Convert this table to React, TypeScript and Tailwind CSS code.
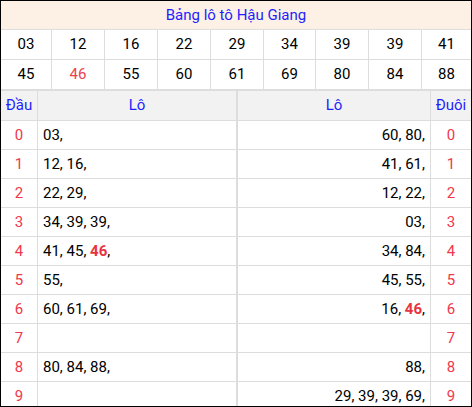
import React from "react";

const nums1 = ["03", "12", "16", "22", "29", "34", "39", "39", "41"];
const nums2 = ["45", "46", "55", "60", "61", "69", "80", "84", "88"];
const colW = ["w-[51px]", "w-[53px]", "w-[53px]", "w-[53px]", "w-[53px]", "w-[52px]", "w-[53px]", "w-[53px]", "w-[49px]"];

type Part = { t: string; hot?: boolean };
const rows: { d: string; left: Part[]; right: Part[] }[] = [
  { d: "0", left: [{ t: "03," }], right: [{ t: "60, 80," }] },
  { d: "1", left: [{ t: "12, 16," }], right: [{ t: "41, 61," }] },
  { d: "2", left: [{ t: "22, 29," }], right: [{ t: "12, 22," }] },
  { d: "3", left: [{ t: "34, 39, 39," }], right: [{ t: "03," }] },
  { d: "4", left: [{ t: "41, 45, " }, { t: "46", hot: true }, { t: "," }], right: [{ t: "34, 84," }] },
  { d: "5", left: [{ t: "55," }], right: [{ t: "45, 55," }] },
  { d: "6", left: [{ t: "60, 61, 69," }], right: [{ t: "16, " }, { t: "46", hot: true }, { t: "," }] },
  { d: "7", left: [], right: [] },
  { d: "8", left: [{ t: "80, 84, 88," }], right: [{ t: "88," }] },
  { d: "9", left: [], right: [{ t: "29, 39, 39, 69," }] },
];

function Parts({ parts }: { parts: Part[] }) {
  return (
    <span className="whitespace-pre">
      {parts.map((p, i) =>
        p.hot ? (
          <b key={i} className="font-bold text-[#e8333f]">
            {p.t}
          </b>
        ) : (
          <React.Fragment key={i}>{p.t}</React.Fragment>
        )
      )}
    </span>
  );
}

function NumRow({ nums, last }: { nums: string[]; last?: boolean }) {
  return (
    <div className={`flex ${last ? "h-[31px] border-b-2" : "h-[30px] border-b"} border-[#dddddd]`}>
      {nums.map((n, i) => (
        <div
          key={i}
          className={`${colW[i]} flex items-center justify-center ${i < 8 ? "border-r border-[#dddddd]" : ""} ${
            n === "46" ? "text-[#ee3e50]" : "text-black"
          }`}
        >
          {n}
        </div>
      ))}
    </div>
  );
}

export default function App() {
  return (
    <div
      className="w-[472px] h-[407px] border border-black overflow-hidden bg-white text-[15px] leading-none"
      style={{ fontFamily: "Roboto, 'Noto Sans', sans-serif" }}
    >
      <div className="h-[29px] bg-[#fdf0e4] border-b border-[#dddddd] flex items-center justify-center text-[#1f1fff]">
        Bảng lô tô Hậu Giang
      </div>
      <NumRow nums={nums1} />
      <NumRow nums={nums2} last />
      <div className="flex h-[30px] bg-[#f2f2f2] border-b border-[#dddddd] text-[#1f1fff]">
        <div className="w-[37px] border-r border-[#dddddd] flex items-center justify-center">Đầu</div>
        <div className="w-[200px] border-r-2 border-[#dddddd] flex items-center justify-center">Lô</div>
        <div className="w-[193px] border-r border-[#dddddd] flex items-center justify-center">Lô</div>
        <div className="w-[40px] flex items-center justify-center">Đuôi</div>
      </div>
      {rows.map((r) => (
        <div key={r.d} className="flex h-[29px] border-b border-[#dddddd] shrink-0">
          <div className="w-[37px] border-r border-[#dddddd] flex items-center justify-center text-[#f0384c]">
            {r.d}
          </div>
          <div className="w-[200px] border-r-2 border-[#dddddd] flex items-center pl-[5px] text-black">
            <Parts parts={r.left} />
          </div>
          <div className="w-[193px] border-r border-[#dddddd] flex items-center justify-end pr-[5px] text-black">
            <Parts parts={r.right} />
          </div>
          <div className="w-[40px] flex items-center justify-center text-[#f0384c]">{r.d}</div>
        </div>
      ))}
    </div>
  );
}
